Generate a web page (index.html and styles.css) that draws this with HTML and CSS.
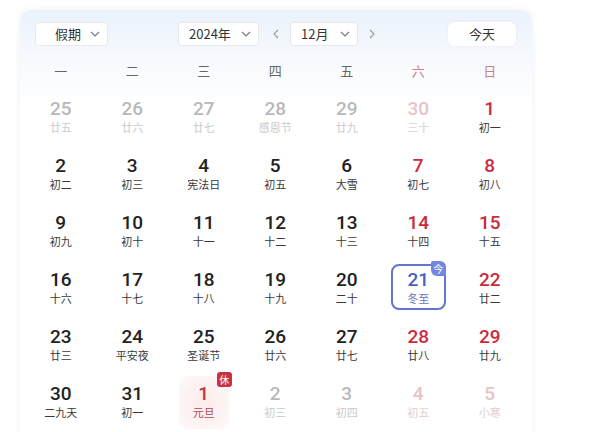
FILE: index.html
```html
<!DOCTYPE html>
<html lang="zh">
<head>
<meta charset="utf-8">
<link rel="stylesheet" href="styles.css">
</head>
<body>
<div class="card">
  <div class="toolbar">
    <div class="select sel-holiday"><span>假期</span><svg class="chev" viewBox="0 0 10 6"><path d="M1 1l4 4 4-4"/></svg></div>
    <div class="mid">
      <div class="select sel-year"><span>2024年</span><svg class="chev" viewBox="0 0 10 6"><path d="M1 1l4 4 4-4"/></svg></div>
      <svg class="arrow" viewBox="0 0 6 10"><path d="M5 1L1 5l4 4"/></svg>
      <div class="select sel-month"><span>12月</span><svg class="chev" viewBox="0 0 10 6"><path d="M1 1l4 4 4-4"/></svg></div>
      <svg class="arrow" viewBox="0 0 6 10"><path d="M1 1l4 4-4 4"/></svg>
    </div>
    <div class="today-btn">今天</div>
  </div>
  <div class="weekdays">
    <span>一</span><span>二</span><span>三</span><span>四</span><span>五</span><span class="we">六</span><span class="we">日</span>
  </div>
  <div class="grid">
    <div class="cell other"><b>25</b><i>廿五</i></div>
    <div class="cell other"><b>26</b><i>廿六</i></div>
    <div class="cell other"><b>27</b><i>廿七</i></div>
    <div class="cell other"><b>28</b><i>感恩节</i></div>
    <div class="cell other"><b>29</b><i>廿九</i></div>
    <div class="cell other wk"><b>30</b><i>三十</i></div>
    <div class="cell red"><b>1</b><i>初一</i></div>

    <div class="cell"><b>2</b><i>初二</i></div>
    <div class="cell"><b>3</b><i>初三</i></div>
    <div class="cell"><b>4</b><i>宪法日</i></div>
    <div class="cell"><b>5</b><i>初五</i></div>
    <div class="cell"><b>6</b><i>大雪</i></div>
    <div class="cell red"><b>7</b><i>初七</i></div>
    <div class="cell red"><b>8</b><i>初八</i></div>

    <div class="cell"><b>9</b><i>初九</i></div>
    <div class="cell"><b>10</b><i>初十</i></div>
    <div class="cell"><b>11</b><i>十一</i></div>
    <div class="cell"><b>12</b><i>十二</i></div>
    <div class="cell"><b>13</b><i>十三</i></div>
    <div class="cell red"><b>14</b><i>十四</i></div>
    <div class="cell red"><b>15</b><i>十五</i></div>

    <div class="cell"><b>16</b><i>十六</i></div>
    <div class="cell"><b>17</b><i>十七</i></div>
    <div class="cell"><b>18</b><i>十八</i></div>
    <div class="cell"><b>19</b><i>十九</i></div>
    <div class="cell"><b>20</b><i>二十</i></div>
    <div class="cell today"><div class="box"><b>21</b><i>冬至</i><span class="badge-today">今</span></div></div>
    <div class="cell red"><b>22</b><i>廿二</i></div>

    <div class="cell"><b>23</b><i>廿三</i></div>
    <div class="cell"><b>24</b><i>平安夜</i></div>
    <div class="cell"><b>25</b><i>圣诞节</i></div>
    <div class="cell"><b>26</b><i>廿六</i></div>
    <div class="cell"><b>27</b><i>廿七</i></div>
    <div class="cell red"><b>28</b><i>廿八</i></div>
    <div class="cell red"><b>29</b><i>廿九</i></div>

    <div class="cell"><b>30</b><i>二九天</i></div>
    <div class="cell"><b>31</b><i>初一</i></div>
    <div class="cell holiday"><div class="box"><b>1</b><i>元旦</i><span class="badge-rest">休</span></div></div>
    <div class="cell other"><b>2</b><i>初三</i></div>
    <div class="cell other"><b>3</b><i>初四</i></div>
    <div class="cell other wk"><b>4</b><i>初五</i></div>
    <div class="cell other wk"><b>5</b><i>小寒</i></div>
  </div>
</div>
</body>
</html>
```
FILE: styles.css
```css
* { box-sizing: border-box; }
html, body { margin: 0; padding: 0; background: #ffffff; }
body {
  font-family: "Noto Sans CJK SC", "Noto Sans", sans-serif;
  color: #333;
  width: 600px;
  height: 432px;
  overflow: hidden;
}
.card {
  margin: 10px 0 0 20px;
  width: 512px;
  height: 440px;
  border-radius: 12px;
  background: linear-gradient(180deg, #eaf2fb 0px, #f6f9fd 45px, #ffffff 95px);
  box-shadow: 0 0 6px rgba(120, 140, 170, 0.14);
  padding: 12px 0 0 5px;
}
.toolbar {
  display: flex;
  align-items: center;
  height: 24px;
  padding-left: 10px;
}
.select {
  display: flex;
  align-items: center;
  justify-content: space-between;
  height: 24px;
  background: #fff;
  border: 1px solid #e6e9ee;
  border-radius: 4px;
  font-size: 13px;
  color: #333;
  line-height: 22px;
}
.sel-holiday { width: 73px; padding: 0 7px 0 19px; }
.sel-year { width: 81px; padding: 0 7px 0 10px; }
.sel-month { width: 68px; padding: 0 7px 0 10px; }
.chev { width: 10px; height: 6px; fill: none; stroke: #777; stroke-width: 1.1; }
.mid {
  display: flex;
  align-items: center;
  margin-left: 70px;
}
.arrow { width: 6px; height: 10px; fill: none; stroke: #999; stroke-width: 1.1; margin: 0 11px 0 14px; }
.mid .arrow:last-child { margin: 0 0 0 11px; }
.today-btn {
  margin-left: 73px;
  width: 68px;
  height: 24px;
  line-height: 24px;
  text-align: center;
  background: #fff;
  border-radius: 6px;
  font-size: 13px;
  color: #333;
  box-shadow: 0 0 2px rgba(200, 210, 225, 0.4);
}
.weekdays {
  display: grid;
  grid-template-columns: repeat(7, 71.5px);
  margin-top: 14px;
  height: 22px;
  line-height: 22px;
  font-size: 13px;
  color: #666;
  text-align: center;
}
.weekdays .we { color: #cf7f86; }
.grid {
  display: grid;
  grid-template-columns: repeat(7, 71.5px);
  grid-auto-rows: 57px;
  margin-top: 5px;
}
.cell {
  position: relative;
  display: flex;
  flex-direction: column;
  align-items: center;
  justify-content: center;
  text-align: center;
}
.cell b, .box b {
  display: block;
  font-family: Roboto, "Noto Sans", sans-serif;
  font-weight: 500;
  font-size: 19px;
  line-height: 22px;
  color: #222;
}
.cell i, .box i {
  display: block;
  font-style: normal;
  font-size: 11px;
  line-height: 14px;
  color: #3a3a3a;
}
.cell.red b { color: #cc2b3c; }
.cell.other b { color: #b9b9b9; }
.cell.other i { color: #cacaca; }
.cell.other.wk b { color: #e8c3c7; }
.cell.other.wk i { color: #e3cfd1; }
.today .box {
  position: relative;
  width: 55px;
  height: 46px;
  border: 2px solid #6376cf;
  border-radius: 8px;
  display: flex;
  flex-direction: column;
  align-items: center;
  justify-content: center;
  padding-top: 1px;
}
.today .box b { color: #4b5fc2; }
.today .box i { color: #6a77b6; }
.badge-today {
  position: absolute;
  top: -5px;
  right: -2px;
  width: 15px;
  height: 15px;
  background: #7187e2;
  color: #fff;
  font-size: 10px;
  line-height: 15px;
  text-align: center;
  border-radius: 2px 6px 2px 6px;
}
.holiday .box {
  position: relative;
  width: 50px;
  height: 54px;
  margin-top: 4px;
  border-radius: 8px;
  background: radial-gradient(ellipse at center, #fdecec 0%, #fdf3f3 60%, #fffafa 100%);
  display: flex;
  flex-direction: column;
  align-items: center;
  justify-content: center;
  padding-bottom: 4px;
}
.holiday .box b { color: #c2343f; }
.holiday .box i { color: #a84a4f; }
.badge-rest {
  position: absolute;
  top: -4px;
  right: -3px;
  width: 15px;
  height: 15px;
  background: #c73340;
  color: #fff;
  font-size: 10px;
  line-height: 15px;
  text-align: center;
  border-radius: 3px;
}
```
